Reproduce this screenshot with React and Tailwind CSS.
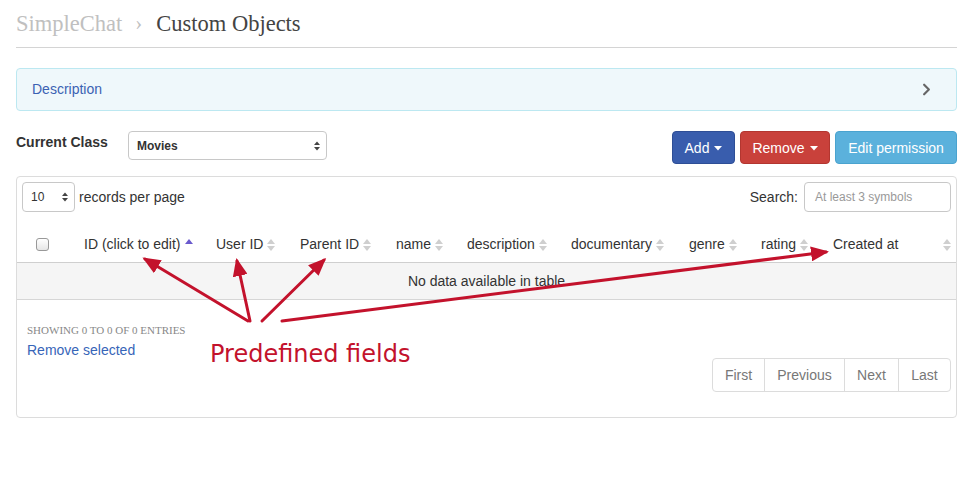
import { ChevronRight } from 'lucide-react';

const SANS = { fontFamily: '"Liberation Sans", Arial, sans-serif' };
const SERIF = { fontFamily: '"Liberation Serif", "Times New Roman", serif' };

function SortIcon({ active }) {
    if (active) {
        return (
            <svg width="8" height="14" viewBox="0 0 8 14" className="ml-[5px] shrink-0">
                <path d="M0 6 L4 1 L8 6 Z" fill="#6a5acd" />
            </svg>
        );
    }
    return (
        <svg width="8" height="14" viewBox="0 0 8 14" className="ml-[4px] shrink-0">
            <path d="M0 6 L4 1 L8 6 Z" fill="#cfcfcf" />
            <path d="M0 8 L4 13 L8 8 Z" fill="#cfcfcf" />
        </svg>
    );
}

function SelectArrows() {
    return (
        <svg width="6" height="10" viewBox="0 0 6 10">
            <path d="M0 4 L3 0.5 L6 4 Z" fill="#444" />
            <path d="M0 6 L3 9.5 L6 6 Z" fill="#444" />
        </svg>
    );
}

function Caret() {
    return (
        <svg width="8" height="5" viewBox="0 0 8 5" className="ml-[5px]">
            <path d="M0 0 L8 0 L4 4.5 Z" fill="#fff" />
        </svg>
    );
}

const columns = [
    { label: 'ID (click to edit)', w: 132, active: true },
    { label: 'User ID', w: 84 },
    { label: 'Parent ID', w: 96 },
    { label: 'name', w: 71 },
    { label: 'description', w: 104 },
    { label: 'documentary', w: 118 },
    { label: 'genre', w: 72 },
    { label: 'rating', w: 72 },
];

function Annotations() {
    return (
        <svg width="967" height="487" className="absolute left-0 top-0 pointer-events-none">
            <defs>
                <marker id="head" markerWidth="6" markerHeight="5" refX="5" refY="2.5" orient="auto" markerUnits="strokeWidth">
                    <path d="M0 0 L6 2.5 L0 5 Z" fill="#c3122c" />
                </marker>
            </defs>
            <g stroke="#c3122c" strokeWidth="3" fill="none" strokeLinecap="round">
                <line x1="248" y1="321" x2="145" y2="259" markerEnd="url(#head)" />
                <line x1="250" y1="321" x2="237" y2="261" markerEnd="url(#head)" />
                <line x1="262" y1="321" x2="324" y2="260" markerEnd="url(#head)" />
                <line x1="282" y1="321" x2="826" y2="252" markerEnd="url(#head)" />
            </g>
        </svg>
    );
}

export default function App() {
    return (
        <div className="relative w-[967px] h-[487px] bg-white overflow-hidden text-[#333]" style={SANS}>
            <div className="pl-4 pr-[10px]">
                {/* Breadcrumb header */}
                <div className="pt-[9px] pb-[9px] border-b border-[#d4d4d4] flex items-center text-[22.5px] leading-[29px]" style={SERIF}>
                    <span className="text-[#c0c0c0]">SimpleChat</span>
                    <span className="text-[#c0c0c0] text-[21px] ml-[13px] mr-[14px]">›</span>
                    <span className="text-[#444]">Custom Objects</span>
                </div>

                {/* Description */}
                <div className="mt-[20px] h-[43px] rounded-[4px] border border-[#bce8f1] bg-[#eff8fb] flex items-center justify-between pl-[15px] pr-[20px]">
                    <span className="text-[14px] text-[#3b62b3]">Description</span>
                    <ChevronRight size={19} strokeWidth={2.75} color="#666" />
                </div>

                {/* Class row */}
                <div className="mt-[20px] flex items-start justify-between">
                    <div className="flex items-start">
                        <span className="w-[112px] pt-[2px] text-[14px] font-bold leading-[18px]">Current Class</span>
                        <div className="w-[199px] h-[29px] rounded-[4px] border border-[#c8c8c8] flex items-center justify-between pl-[8px] pr-[6px]">
                            <span className="text-[12px] font-bold text-[#333]">Movies</span>
                            <SelectArrows />
                        </div>
                    </div>
                    <div className="flex gap-[5px] text-[14px] text-white">
                        <button className="h-[33px] w-[63px] rounded-[4px] bg-[#395dad] border border-[#2e4e96] flex items-center justify-center pt-[1px]">
                            Add<Caret />
                        </button>
                        <button className="h-[33px] w-[90px] rounded-[4px] bg-[#c9413b] border border-[#b33630] flex items-center justify-center pt-[1px]">
                            Remove<Caret />
                        </button>
                        <button className="h-[33px] w-[122px] rounded-[4px] bg-[#5bb1dc] border border-[#4aa3cf] flex items-center justify-center pt-[1px]">
                            Edit permission
                        </button>
                    </div>
                </div>

                {/* Table panel */}
                <div className="mt-[12px] h-[242px] rounded-[4px] border border-[#dcdcdc]">
                    <div className="flex items-center justify-between pt-[5px] pl-[5px] pr-[5px]">
                        <div className="flex items-center text-[14px]">
                            <div className="w-[53px] h-[30px] rounded-[4px] border border-[#c8c8c8] flex items-center justify-between pl-[8px] pr-[6px]">
                                <span className="text-[12px]">10</span>
                                <SelectArrows />
                            </div>
                            <span className="ml-[4px]">records per page</span>
                        </div>
                        <div className="flex items-center text-[14px]">
                            <span>Search:</span>
                            <div className="ml-[6px] w-[147px] h-[30px] rounded-[4px] border border-[#c8c8c8] flex items-center px-[10px]">
                                <span className="text-[12px] text-[#999]">At least 3 symbols</span>
                            </div>
                        </div>
                    </div>

                    {/* Header row */}
                    <div className="mt-[16px] flex items-center h-[35px] pb-[1px] border-b border-[#cfcfcf] text-[14px]">
                        <div className="w-[59px] flex justify-start pl-[19px]">
                            <div className="w-[13px] h-[13px] rounded-[3px] border border-[#999] bg-gradient-to-b from-white to-[#e6e6e6]" />
                        </div>
                        {columns.map(c => (
                            <div key={c.label} className="flex items-center pl-[8px]" style={{ width: c.w }}>
                                <span>{c.label}</span>
                                <SortIcon active={c.active} />
                            </div>
                        ))}
                        <div className="flex-1 flex items-center justify-between pl-[8px] pr-[5px]">
                            <span>Created at</span>
                            <SortIcon />
                        </div>
                    </div>

                    {/* Empty row */}
                    <div className="h-[37px] bg-[#f5f5f5] border-b border-[#d6d6d6] flex items-center justify-center text-[14px]">
                        No data available in table
                    </div>

                    {/* Footer */}
                    <div className="flex justify-between pl-[10px] pr-[5px]">
                        <div className="pt-[23px]">
                            <div className="text-[11px] leading-[14px] text-[#888] uppercase" style={SERIF}>Showing 0 to 0 of 0 entries</div>
                            <div className="mt-[3px] text-[14px] leading-[20px] text-[#3765b8]">Remove selected</div>
                        </div>
                        <div className="mt-[58px] flex h-[34px] rounded-[4px] border border-[#dcdcdc] text-[14px] text-[#777]">
                            <span className="w-[52px] flex items-center justify-center border-r border-[#dcdcdc]">First</span>
                            <span className="w-[80px] flex items-center justify-center border-r border-[#dcdcdc]">Previous</span>
                            <span className="w-[54px] flex items-center justify-center border-r border-[#dcdcdc]">Next</span>
                            <span className="w-[51px] flex items-center justify-center">Last</span>
                        </div>
                    </div>
                </div>
            </div>

            <Annotations />
            <span className="absolute left-[210px] top-[340px] text-[24px] leading-[28px] text-[#c3122c]" style={{ fontFamily: '"Lucida Grande", "DejaVu Sans", sans-serif' }}>
                Predefined fields
            </span>
        </div>
    );
}
